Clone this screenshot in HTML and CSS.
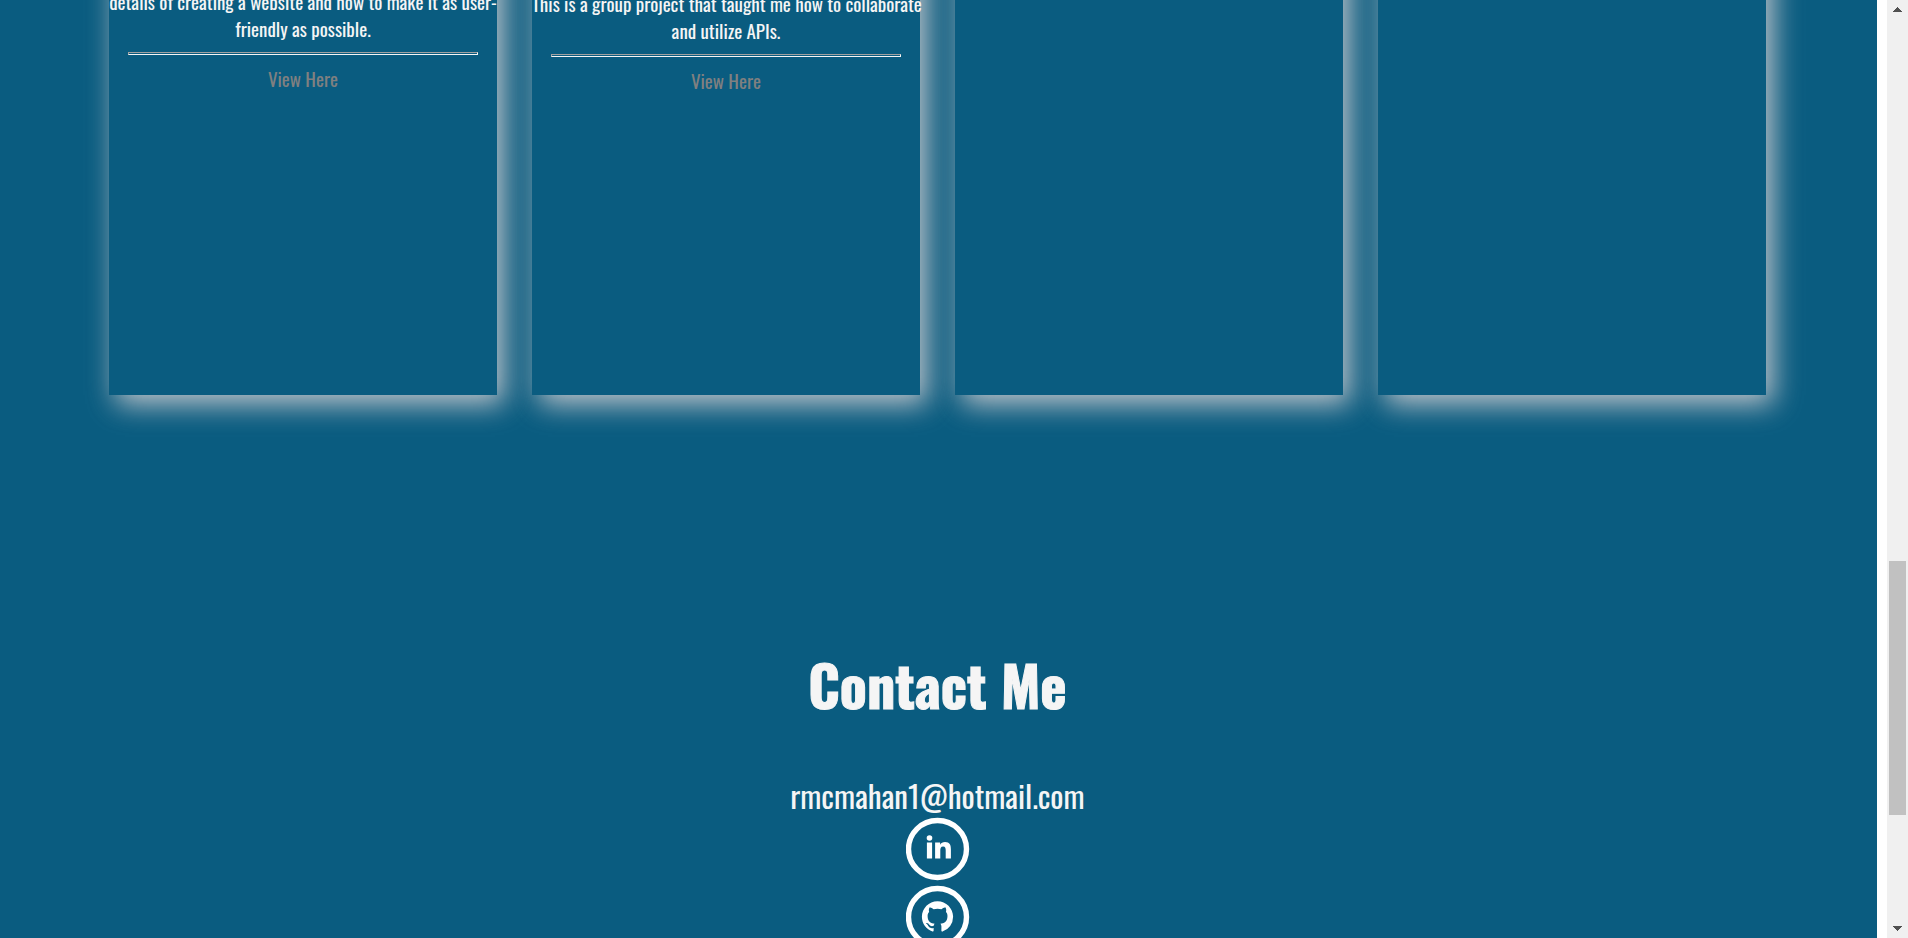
FILE: index.html
```html
<!DOCTYPE html>
<html lang="en">
<head>
<meta charset="utf-8">
<title>Portfolio</title>
<link rel="stylesheet" href="styles.css">
</head>
<body>
<div class="page">
  <main class="content">
    <section class="projects">
      <article class="card">
        <p class="card-text">details of creating a website and how to make it as user-<br>friendly as possible.</p>
        <hr class="rule">
        <a class="card-link" href="#first">View Here</a>
      </article>
      <article class="card card-low">
        <p class="card-text">This is a group project that taught me how to collaborate<br>and utilize APIs.</p>
        <hr class="rule">
        <a class="card-link" href="#second">View Here</a>
      </article>
      <article class="card"></article>
      <article class="card"></article>
    </section>
    <section class="contact">
      <h1 class="contact-title">Contact Me</h1>
      <a class="email" href="mailto:rmcmahan1@hotmail.com">rmcmahan1@hotmail.com</a>
      <a class="social" href="#linkedin" aria-label="LinkedIn">
        <svg class="icon" viewBox="0 0 64 64" aria-hidden="true">
          <ellipse cx="31.5" cy="32" rx="29" ry="28.5" fill="none" stroke="#fff" stroke-width="5.4"/>
          <circle cx="23.5" cy="21" r="2.8" fill="#fff"/>
          <path fill="#fff" d="M20.900 25.500h5.200v16h-5.200zM29.100 25.500h5v2.200c.9-1.500 2.600-2.600 5-2.600 4.600 0 5.800 3 5.800 7.300V41.500h-5.200v-8c0-2-.3-4.100-2.600-4.100-2.400 0-2.800 1.900-2.800 4V41.500h-5.200z"/>
        </svg>
      </a>
      <a class="social" href="#github" aria-label="GitHub">
        <svg class="icon" viewBox="0 0 64 64" aria-hidden="true">
          <ellipse cx="31.5" cy="32" rx="29" ry="28.5" fill="none" stroke="#fff" stroke-width="5.4"/>
          <path fill="#fff" transform="translate(15.9 16.2) scale(1.95)" d="M8 0C3.580 0 0 3.580 0 8c0 3.540 2.290 6.530 5.470 7.590.4.070.55-.17.55-.38 0-.19-.01-.82-.01-1.490-2.010.37-2.530-.49-2.690-.94-.09-.23-.48-.94-.82-1.130-.28-.15-.68-.52-.01-.53.63-.01 1.080.58 1.230.82.72 1.210 1.870.87 2.330.66.070-.52.28-.87.51-1.070-1.780-.2-3.640-.89-3.640-3.950 0-.87.31-1.590.82-2.150-.08-.2-.36-1.020.08-2.120 0 0 .67-.21 2.200.82.64-.18 1.320-.27 2-.27s1.360.09 2 .27c1.530-1.040 2.200-.82 2.200-.82.44 1.100.16 1.920.08 2.120.51.56.82 1.270.82 2.150 0 3.070-1.870 3.750-3.650 3.950.29.25.54.73.54 1.480 0 1.070-.01 1.930-.01 2.200 0 .21.15.46.55.38A8.010 8.010 0 0 0 16 8c0-4.420-3.580-8-8-8z"/>
        </svg>
      </a>
    </section>
  </main>
  <div class="scrollbar" aria-hidden="true">
    <svg class="arrow" viewBox="0 0 9 5"><path fill="#505050" d="M4 0h1v1h1v1h1v1h1v1h1v1H0V4h1V3h1V2h1V1h1z"/></svg>
    <div class="thumb"></div>
    <svg class="arrow" viewBox="0 0 9 5"><path fill="#505050" d="M0 0h9v1H8v1H7v1H6v1H5v1H4V4H3V3H2V2H1V1H0z"/></svg>
  </div>
</div>
</body>
</html>
```
FILE: styles.css
```css
* {
  box-sizing: border-box;
}

body {
  margin: 0;
  background: #fff;
  color: whitesmoke;
  font-family: Oswald, "Roboto Condensed", "Open Sans Condensed", "Liberation Sans Narrow", "Liberation Sans", sans-serif;
}

.page {
  display: flex;
  gap: 10px;
  height: 100vh;
  overflow: hidden;
}

.content {
  flex: 1;
  overflow: hidden;
  background: #0a5c80;
}

.projects {
  display: grid;
  grid-template-columns: repeat(4, minmax(0, 1fr));
  gap: 35px;
  height: 455px;
  margin: -60px 111px 0 109px;
}

.card {
  padding-top: 48px;
  background: #0a5c80;
  box-shadow: 7px 9px 27px rgba(225, 215, 215, 0.85);
  text-align: center;
}

.card-low {
  padding-top: 50px;
}

.card-text {
  margin: 0;
  font-size: 19px;
  font-weight: 400;
  line-height: 27px;
  white-space: nowrap;
}

.rule {
  width: 90%;
  height: 3px;
  margin: 10px auto;
  border: 1px inset #f5f5f5;
}

.card-link {
  color: gray;
  font-size: 19px;
  line-height: 27px;
  text-decoration: none;
}

.contact {
  display: flex;
  flex-direction: column;
  align-items: center;
  padding: 247px 2px 0 0;
}

.contact-title {
  margin: 0 0 47px;
  font-size: 56px;
  line-height: 84px;
  -webkit-text-stroke: 1px whitesmoke;
}

.email {
  color: whitesmoke;
  font-size: 31px;
  line-height: 44px;
  text-decoration: none;
}

.social {
  height: 68px;
}

.icon {
  display: block;
  width: 64px;
  height: 64px;
}

.scrollbar {
  display: grid;
  grid-template-rows: 554px 254px 1fr;
  justify-items: center;
  width: 21px;
  padding: 7px 2px;
  background: #f0f0f0;
}

.arrow {
  width: 9px;
  height: 5px;
}

.arrow:last-child {
  align-self: end;
}

.thumb {
  width: 17px;
  background: #c1c1c1;
}
```
